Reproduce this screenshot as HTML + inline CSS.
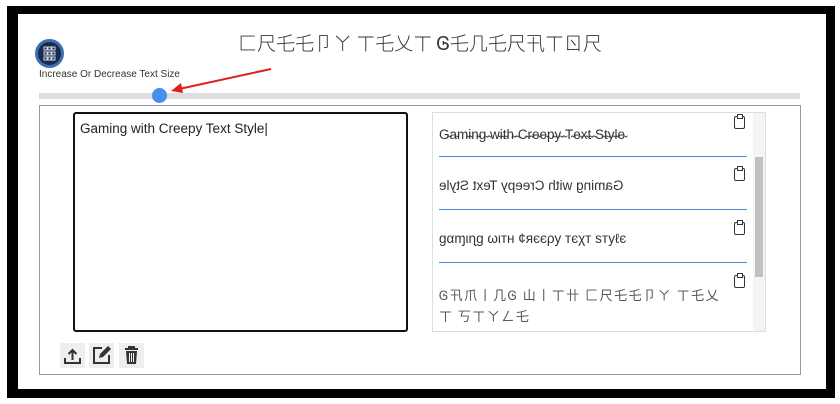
<!DOCTYPE html>
<html><head><meta charset="utf-8"><style>
*{margin:0;padding:0;box-sizing:border-box}
body{width:840px;height:404px;background:#fff;position:relative;overflow:hidden;font-family:"Liberation Sans","Noto Sans CJK SC",sans-serif}
.frame{position:absolute;left:7px;top:6px;width:828px;height:392px;background:#000}
.inner{position:absolute;left:18px;top:14px;width:808px;height:375px;background:#fff}
.title{position:absolute;left:0;width:840px;top:29px;text-align:center;font-size:19px;color:#333;letter-spacing:0px;font-family:"Noto Sans CJK SC",sans-serif;font-weight:300}
.ic{position:absolute;left:35px;top:39px;width:29px;height:29px;border-radius:50%;background:#1b2a4a;border:3px solid #3c6fb0}
.lbl{position:absolute;left:39px;top:69px;font-size:10px;color:#333}
.track{position:absolute;left:39px;top:93px;width:761px;height:6px;background:#ddd}
.thumb{position:absolute;left:152px;top:88px;width:15px;height:15px;border-radius:50%;background:#4a8cf0}
.box{position:absolute;left:39px;top:105px;width:762px;height:270px;border:1px solid #999}
.ta{position:absolute;left:73px;top:112px;width:335px;height:220px;border:2px solid #111;border-radius:3px;font-size:13.5px;padding:7px 5px;color:#222}
.list{position:absolute;left:432px;top:112px;width:334px;height:220px;border:1px solid #ddd}
.sb{position:absolute;right:0;top:0;width:12px;height:218px;background:#f4f4f4}
.sb i{position:absolute;left:2px;top:44px;width:8px;height:120px;background:#c1c1c1}
.it{position:absolute;left:6px;width:308px;border-bottom:1px solid #4a8ce0;font-size:13.5px;color:#333}
.clip{position:absolute;width:11px;height:13px;border:1.5px solid #333;border-radius:2px}
.clip:before{content:"";position:absolute;left:2px;top:-3px;width:4px;height:3px;border:1.5px solid #333;background:#fff}
.btn{position:absolute;top:343px;width:25px;height:25px;background:#eee}
</style></head><body>
<div class="frame"></div><div class="inner"></div>
<div class="title">匚尺乇乇卩ㄚ ㄒ乇乂ㄒ Ꮆ乇几乇尺卂ㄒㄖ尺</div>
<div class="ic"><svg width="23" height="23" viewBox="0 0 23 23"><g fill="none" stroke="#cfd8e8" stroke-width="1"><rect x="6" y="5" width="3" height="3"/><rect x="10" y="5" width="3" height="3"/><rect x="14" y="5" width="3" height="3"/><rect x="6" y="10" width="3" height="3"/><rect x="10" y="10" width="3" height="3"/><rect x="14" y="10" width="3" height="3"/><rect x="6" y="15" width="3" height="3"/><rect x="10" y="15" width="3" height="3"/><rect x="14" y="15" width="3" height="3"/></g></svg></div>
<div class="lbl">Increase Or Decrease Text Size</div>
<div class="track"></div><div class="thumb"></div>
<svg style="position:absolute;left:165px;top:66px" width="110" height="30"><line x1="106" y1="3" x2="14" y2="23" stroke="#e02020" stroke-width="2"/><polygon points="6,25 16,17 18,27" fill="#e02020"/></svg>
<div class="box"></div>
<div class="ta">Gaming with Creepy Text Style|</div>
<div class="list">
<div class="it" style="top:0;height:44px;padding-top:14px">G̴a̴m̴i̴n̴g̴ ̴w̴i̴t̴h̴ ̴C̴r̴e̴e̴p̴y̴ ̴T̴e̴x̴t̴ ̴S̴t̴y̴l̴e̴</div>
<div class="it" style="top:44px;height:53px;padding-top:21px"><span style="display:inline-block;transform:scaleX(-1)">Gaming with Creepy Text Style</span></div>
<div class="it" style="top:97px;height:53px;padding-top:21px">ɡαɱιɳɡ ωιтн ¢яєєρу тєχт ѕтуℓє</div>
<div class="it" style="top:150px;height:70px;padding-top:21px;border:0;font-family:'Noto Sans CJK SC',sans-serif;font-size:13px;line-height:21px;color:#555;letter-spacing:1.5px;width:290px">Ꮆ卂爪丨几Ꮆ 山丨ㄒ卄 匚尺乇乇卩ㄚ ㄒ乇乂ㄒ 丂ㄒㄚㄥ乇</div>
<div class="clip" style="left:301px;top:3px"></div>
<div class="clip" style="left:301px;top:55px"></div>
<div class="clip" style="left:301px;top:109px"></div>
<div class="clip" style="left:301px;top:162px"></div>
<div class="sb"><i></i></div>
</div>
<div class="btn" style="left:60px"><svg width="25" height="25"><path d="M12.5 17V7M8.5 11l4-4 4 4M5 15v5h15v-5" fill="none" stroke="#333" stroke-width="2"/></svg></div>
<div class="btn" style="left:89px"><svg width="25" height="25"><path d="M13 5H5v15h15v-8" fill="none" stroke="#333" stroke-width="2"/><path d="M10 15l1-4 8-8 3 3-8 8z" fill="#333"/></svg></div>
<div class="btn" style="left:119px"><svg width="25" height="25"><path d="M6 6h13M10 6V4h5v2" fill="none" stroke="#333" stroke-width="2"/><path d="M7 8h11l-1 13H8z" fill="#333"/><path d="M10.5 10v9M12.5 10v9M14.5 10v9" stroke="#eee" stroke-width="1"/></svg></div>
</body></html>
